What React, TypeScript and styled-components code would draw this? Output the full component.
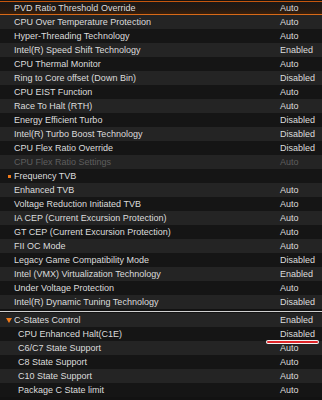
import React from "react";
import styled, { createGlobalStyle } from "styled-components";

const GlobalStyle = createGlobalStyle`
  html, body {
    margin: 0;
    padding: 0;
    background: #121212;
  }
  body {
    width: 322px;
    height: 400px;
    overflow: hidden;
    font-family: "Liberation Sans", Arial, sans-serif;
  }
`;

const Panel = styled.div`
  width: 322px;
  height: 400px;
  padding-top: 1px;
  box-sizing: border-box;
  background: #121212;
`;

const Group = styled.div`
  display: flex;
  flex-direction: column;
`;

const Row = styled.div<{ $shade: boolean; $selected?: boolean }>`
  position: relative;
  height: 14px;
  display: grid;
  grid-template-columns: 1fr 42px;
  align-items: center;
  box-sizing: border-box;
  padding-left: 4px;
  background: ${(p) => (p.$shade ? "#242424" : "#151515")};
  ${(p) =>
    p.$selected &&
    `
    background: linear-gradient(180deg, #1b1816 0%, #231a13 60%, #3a1f0b 100%);
    border-top: 1px solid #c4560e;
    border-bottom: 1px solid #d86a18;
    box-shadow: 0 1px 2px rgba(220, 100, 20, 0.45);
  `}
`;

const Marker = styled.span`
  width: 10px;
  display: flex;
  align-items: center;
  justify-content: center;
`;

const Label = styled.span<{ $dim?: boolean; $indent?: boolean }>`
  display: flex;
  align-items: center;
  font-size: 9px;
  color: ${(p) => (p.$dim ? "#5e5e5e" : "#dcdcdc")};
  white-space: nowrap;
  padding-left: ${(p) => (p.$indent ? "4px" : "0")};
`;

const Value = styled.span<{ $dim?: boolean }>`
  font-size: 9px;
  color: ${(p) => (p.$dim ? "#5e5e5e" : "#dcdcdc")};
  white-space: nowrap;
`;

const Bullet = styled.span`
  width: 3px;
  height: 3px;
  background: #f07a1a;
`;

const Divider = styled.div`
  height: 1px;
  margin: 2px 0 1px;
  background: #cfcfcf;
`;

const RedMark = styled.span`
  position: absolute;
  left: 267px;
  right: 4px;
  bottom: -2px;
  height: 2px;
  border-radius: 2px;
  background: #e0262a;
  box-shadow: 0 0 0 1px #f4f4f4;
  z-index: 2;
`;

type Item = {
  label: string;
  value?: string;
  dim?: boolean;
  mark?: "bullet" | "arrow";
  indent?: boolean;
  selected?: boolean;
  underline?: boolean;
};

const main: Item[] = [
  { label: "PVD Ratio Threshold Override", value: "Auto", selected: true },
  { label: "CPU Over Temperature Protection", value: "Auto" },
  { label: "Hyper-Threading Technology", value: "Auto" },
  { label: "Intel(R) Speed Shift Technology", value: "Enabled" },
  { label: "CPU Thermal Monitor", value: "Auto" },
  { label: "Ring to Core offset (Down Bin)", value: "Disabled" },
  { label: "CPU EIST Function", value: "Auto" },
  { label: "Race To Halt (RTH)", value: "Auto" },
  { label: "Energy Efficient Turbo", value: "Disabled" },
  { label: "Intel(R) Turbo Boost Technology", value: "Disabled" },
  { label: "CPU Flex Ratio Override", value: "Disabled" },
  { label: "CPU Flex Ratio Settings", value: "Auto", dim: true },
  { label: "Frequency TVB", mark: "bullet" },
  { label: "Enhanced TVB", value: "Auto" },
  { label: "Voltage Reduction Initiated TVB", value: "Auto" },
  { label: "IA CEP (Current Excursion Protection)", value: "Auto" },
  { label: "GT CEP (Current Excursion Protection)", value: "Auto" },
  { label: "FII OC Mode", value: "Auto" },
  { label: "Legacy Game Compatibility Mode", value: "Disabled" },
  { label: "Intel (VMX) Virtualization Technology", value: "Enabled" },
  { label: "Under Voltage Protection", value: "Auto" },
  { label: "Intel(R) Dynamic Tuning Technology", value: "Disabled" },
];

const cstates: Item[] = [
  { label: "C-States Control", value: "Enabled", mark: "arrow" },
  { label: "CPU Enhanced Halt(C1E)", value: "Disabled", indent: true, underline: true },
  { label: "C6/C7 State Support", value: "Auto", indent: true },
  { label: "C8 State Support", value: "Auto", indent: true },
  { label: "C10 State Support", value: "Auto", indent: true },
  { label: "Package C State limit", value: "Auto", indent: true },
];

function Arrow() {
  return (
    <svg width="6" height="5" viewBox="0 0 6 5">
      <path d="M0 0 H6 L3 5 Z" fill="#f07a1a" />
    </svg>
  );
}

function SettingRow({ item, shade }: { item: Item; shade: boolean }) {
  return (
    <Row $shade={shade} $selected={item.selected}>
      <Label $dim={item.dim}>
        <Marker>
          {item.mark === "bullet" && <Bullet />}
          {item.mark === "arrow" && <Arrow />}
        </Marker>
        <Label as="span" $dim={item.dim} $indent={item.indent}>
          {item.label}
        </Label>
      </Label>
      <Value $dim={item.dim}>{item.value}</Value>
      {item.underline && <RedMark />}
    </Row>
  );
}

export default function App() {
  return (
    <>
      <GlobalStyle />
      <Panel>
        <Group>
          {main.map((item, i) => (
            <SettingRow key={item.label} item={item} shade={i % 2 === 1} />
          ))}
        </Group>
        <Divider />
        <Group>
          {cstates.map((item, i) => (
            <SettingRow key={item.label} item={item} shade={i % 2 === 0} />
          ))}
        </Group>
      </Panel>
    </>
  );
}
